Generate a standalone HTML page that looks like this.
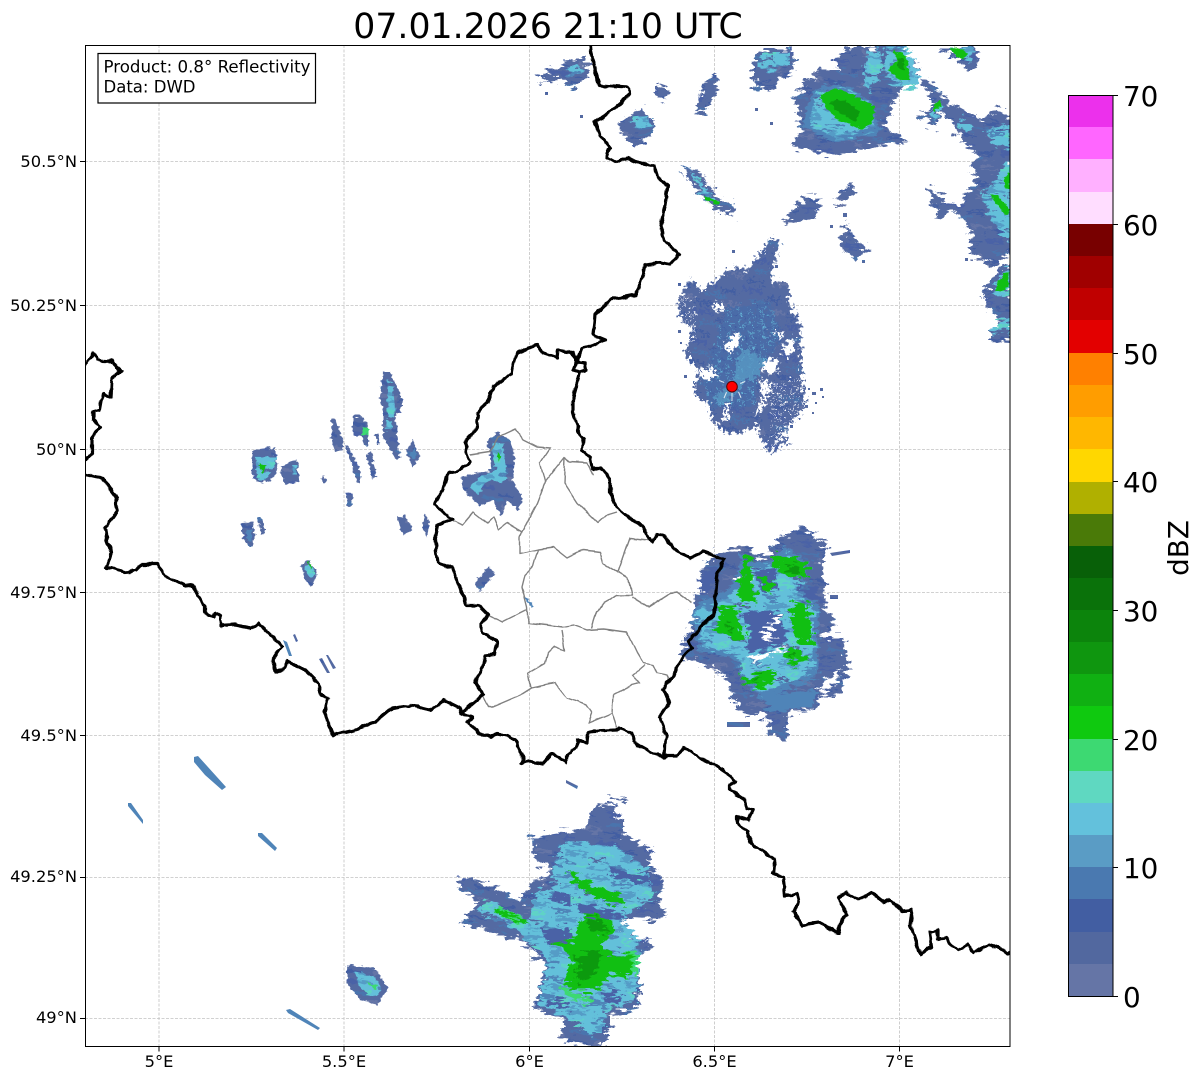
<!DOCTYPE html>
<html><head><meta charset="utf-8"><title>Radar</title>
<style>
html,body{margin:0;padding:0;background:#fff;width:1202px;height:1081px;overflow:hidden}
svg{display:block}
text{font-family:"DejaVu Sans",sans-serif;fill:#000}
.o{fill:url(#po)}.d{fill:#4a62a6}.m{fill:#4f84b8}.l{fill:url(#pl)}.g{fill:#11bf12}.dg{fill:#0c9a0e}.lg{fill:#3dd972}.w{fill:#fff}
.b{fill:none;stroke:#000;stroke-width:3.2;stroke-linejoin:round;stroke-linecap:round}
.a{fill:none;stroke:#808080;stroke-width:1.4;stroke-linejoin:round}
.t{stroke:#000;stroke-width:1}
.gr{stroke:#c2c2c2;stroke-width:.8;stroke-dasharray:3 1.5}
.s{font-size:16.3px}
</style></head><body>
<svg width="1202" height="1081" viewBox="0 0 1202 1081" xmlns="http://www.w3.org/2000/svg">
<defs>
<clipPath id="ax"><rect x="85" y="45" width="925" height="1001"/></clipPath>
<pattern id="po" width="46" height="30" patternUnits="userSpaceOnUse" patternTransform="rotate(10)"><rect width="46" height="30" fill="#546aa2"/><rect y="3" width="20" height="4" fill="#4a62a6"/><rect x="24" y="9" width="16" height="3" fill="#425ea2"/><rect x="8" y="14" width="22" height="3" fill="#4a74ad"/><rect x="30" y="21" width="16" height="4" fill="#6575a6"/><rect x="2" y="24" width="18" height="3" fill="#425ea2"/></pattern>
<pattern id="pl" width="54" height="34" patternUnits="userSpaceOnUse" patternTransform="rotate(8)"><rect width="54" height="34" fill="#63c0da"/><rect y="2" width="20" height="4" fill="#559cc6"/><rect x="26" y="6" width="20" height="3" fill="#4f84b8"/><rect x="6" y="11" width="14" height="4" fill="#5fd3c6"/><rect x="30" y="14" width="22" height="5" fill="#559cc6"/><rect y="19" width="18" height="3" fill="#52689f"/><rect x="20" y="24" width="20" height="4" fill="#4f84b8"/><rect x="42" y="26" width="12" height="4" fill="#5fd3c6"/><rect x="4" y="28" width="12" height="3" fill="#559cc6"/></pattern>
<pattern id="pc" width="11" height="11" patternUnits="userSpaceOnUse"><rect width="11" height="11" fill="#4a6ca8"/><rect x="1" y="2" width="2" height="3" fill="#5a9cc5"/><rect x="6" y="1" width="2" height="2" fill="#52689f"/><rect x="4" y="6" width="2" height="3" fill="#63b0d5"/><rect x="8" y="7" width="2" height="2" fill="#425ea2"/></pattern>
<pattern id="pw" width="9" height="8" patternUnits="userSpaceOnUse"><rect x="1" y="1" width="2" height="2" fill="#fff"/><rect x="6" y="4" width="2" height="1.5" fill="#fff"/></pattern>
<filter id="r" filterUnits="userSpaceOnUse" x="0" y="0" width="1202" height="1081" color-interpolation-filters="sRGB"><feTurbulence type="fractalNoise" baseFrequency=".09 .24" numOctaves="2" seed="4"/><feComponentTransfer result="n"><feFuncR type="discrete" tableValues="0 0 .1 .35 .5 .65 .9 1 1"/><feFuncG type="discrete" tableValues="0 0 .1 .35 .5 .65 .9 1 1"/><feFuncA type="table" tableValues="1 1"/></feComponentTransfer><feDisplacementMap in="SourceGraphic" in2="n" scale="11" xChannelSelector="R" yChannelSelector="G"/></filter>
<filter id="rc" filterUnits="userSpaceOnUse" x="0" y="0" width="1202" height="1081" color-interpolation-filters="sRGB"><feTurbulence type="fractalNoise" baseFrequency=".28" numOctaves="2" seed="9"/><feComponentTransfer result="n"><feFuncR type="discrete" tableValues="0 0 .1 .35 .5 .65 .9 1 1"/><feFuncG type="discrete" tableValues="0 0 .1 .35 .5 .65 .9 1 1"/><feFuncA type="table" tableValues="1 1"/></feComponentTransfer><feDisplacementMap in="SourceGraphic" in2="n" scale="9" xChannelSelector="R" yChannelSelector="G"/></filter>
<filter id="rs" filterUnits="userSpaceOnUse" x="0" y="0" width="1202" height="1081" color-interpolation-filters="sRGB"><feTurbulence type="fractalNoise" baseFrequency=".2 .35" numOctaves="1" seed="2"/><feComponentTransfer result="n"><feFuncR type="discrete" tableValues="0 0 .1 .35 .5 .65 .9 1 1"/><feFuncG type="discrete" tableValues="0 0 .1 .35 .5 .65 .9 1 1"/><feFuncA type="table" tableValues="1 1"/></feComponentTransfer><feDisplacementMap in="SourceGraphic" in2="n" scale="4" xChannelSelector="R" yChannelSelector="G"/></filter>
<filter id="wig" filterUnits="userSpaceOnUse" x="0" y="0" width="1202" height="1081" color-interpolation-filters="sRGB"><feTurbulence type="fractalNoise" baseFrequency=".1" numOctaves="2" seed="7" result="n"/><feDisplacementMap in="SourceGraphic" in2="n" scale="5" xChannelSelector="R" yChannelSelector="G"/></filter>
<filter id="wa" filterUnits="userSpaceOnUse" x="0" y="0" width="1202" height="1081" color-interpolation-filters="sRGB"><feTurbulence type="fractalNoise" baseFrequency=".07" numOctaves="1" seed="3" result="n"/><feDisplacementMap in="SourceGraphic" in2="n" scale="4" xChannelSelector="R" yChannelSelector="G"/></filter>
</defs>
<rect width="1202" height="1081" fill="#fff"/>
<text x="548" y="38" text-anchor="middle" font-size="34.7">07.01.2026 21:10 UTC</text>

<!-- grid -->
<g class="gr">
<path d="M159 45V1046M344 45V1046M529.5 45V1046M714.5 45V1046M899.5 45V1046"/>
<path d="M85 161.5H1010M85 305.5H1010M85 449.5H1010M85 592.5H1010M85 735.5H1010M85 877.5H1010M85 1018.5H1010"/>
</g>

<g clip-path="url(#ax)">
<!-- large echoes with rough edges -->
<g filter="url(#r)">
<path class="o" d="M795 97L818 68L840 70L835 60L847 47L903 47L920 70L900 90L888 117L883 125L910 143L898 143L873 147L835 155L793 147L802 130Z"/>
<path class="m" d="M805 107L820 87L840 83L873 103L880 132L833 143L803 127Z"/>
<path class="l" d="M812 108L824 91L841 88L870 106L875 128L835 137L810 124Z"/>
<path class="l" d="M868 50L878 48L882 70L872 92L863 84ZM888 50L907 47L918 72L912 90L897 84L882 70Z"/>
<path class="o" d="M927 187L950 203L960 205L977 177L970 163L980 157L957 137L955 127L930 97L920 80L933 82L950 103L963 110L980 120L997 108L1012 118L1012 253L990 267L973 253L970 233L960 210L940 218L932 203Z"/>
<path class="l" d="M982 197L1008 160L1012 160L1012 240L997 230ZM985 130L1010 125L1010 150L992 142ZM962 118L972 125L968 132L958 125Z"/>
<path class="o" d="M917 117L937 128L942 107L934 104Z"/>
<path class="l" d="M930 115L938 100L942 108L934 120Z"/>
<path class="o" d="M983 293L1000 267L1012 263L1012 343L993 342L992 327L1000 323L987 307Z"/>
<path class="l" d="M993 292L1002 272L1012 270L1012 293L1000 297ZM992 325L1012 318L1012 333L994 335Z"/>
<path class="o" d="M938 47L973 47L980 60L970 73L957 60Z"/>
<path class="l" d="M948 47L972 48L970 60L958 56Z"/>
<path class="o" d="M760 48L792 48L795 63L790 73L780 78L773 90L755 90L753 60Z"/>
<path class="l" d="M762 52L790 52L790 64L775 70L762 68Z"/>
<path class="o" d="M538 75L550 72L565 62L585 58L590 70L580 85L570 88L560 80L545 82Z"/>
<path class="l" d="M566 70L578 64L582 70L572 76Z"/>
<path class="o" d="M617 125L640 108L655 122L650 135L635 148L625 140Z"/>
<path class="l" d="M632 118L648 116L650 126L636 128Z"/>
<path class="o" d="M718 72L703 82L695 112L705 115L718 90Z"/>
<path class="o" d="M655 85L672 88L665 100L655 95Z"/>
<path class="o" d="M682 165L700 172L720 200L735 205L733 217L715 207L695 190Z"/>
<path class="l" d="M690 172L700 178L716 202L708 200Z"/>
<path class="o" d="M783 225L790 213L803 198L818 197L820 203L813 217L797 222Z"/>
<path class="o" d="M840 247L847 220L853 237L867 250L857 262Z"/>
<path class="o" d="M833 203L847 187L855 187L852 197L840 205Z"/>

<!-- south-east echo -->
<path class="o" d="M700 572L718 552L732 550L748 547L757 558L768 555L780 538L793 533L802 527L827 545L823 567L825 588L823 607L837 623L820 637L843 637L848 670L837 697L820 695L815 710L788 713L787 737L768 737L767 717L738 712L723 673L698 663L680 655L695 617L693 597L712 587Z"/>
<path class="m" d="M693 606L715 596L738 580L738 553L755 563L773 560L783 545L810 563L800 593L820 607L817 640L817 677L787 690L760 700L740 677L737 660L697 650Z"/>
<path class="l" d="M698 610L718 602L742 586L745 560L755 570L775 565L785 552L805 568L797 595L815 610L813 640L812 674L785 684L760 692L742 672L738 655L702 645Z"/>
<path class="d" d="M743 613L770 610L783 617L787 643L750 653L747 633Z"/>
<path class="d" d="M795 585L817 587L823 603L803 597Z"/>
<path class="d" d="M755 570L775 568L778 590L760 592Z"/>
<path class="d" d="M702 572L716 568L714 590L700 592Z"/>
<path class="m" d="M760 695L815 690L812 706L770 712Z"/>
<path class="w" d="M732 578L752 578L752 581L735 581ZM772 617L782 617L780 623L770 622ZM762 632L772 628L775 640L763 640ZM751 657L788 645L772 655L753 663Z"/>
<path class="w" d="M818 694L825 680L840 672L830 690Z"/>
<path class="g" d="M743 555L753 558L751 577L756 602L742 602L739 587L742 577Z"/>
<path class="g" d="M775 555L809 562L805 577L787 577L773 566Z"/>
<path class="g" d="M761 577L775 579L771 594L762 589Z"/>
<path class="g" d="M716 606L736 608L745 640L732 639L711 629L721 620Z"/>
<path class="g" d="M794 600L809 602L812 645L799 645L790 617Z"/>
<path class="g" d="M778 654L793 646L809 657L793 665Z"/>
<path class="g" d="M740 679L760 671L779 671L768 685L755 687Z"/>
<path class="dg" d="M787 565L800 567L798 573L788 572ZM725 625L735 628L732 633ZM788 655L796 652L796 660ZM750 678L762 677L757 683Z"/>

<!-- southern echo -->
<path class="o" d="M457 887L463 878L485 883L520 902L530 882L543 880L550 870L533 857L532 837L583 830L597 803L613 805L623 820L623 835L653 850L647 860L655 870L662 885L657 903L668 913L657 920L620 918L613 927L643 940L653 945L640 957L640 977L637 1010L610 1015L610 1027L603 1046L577 1045L560 1037L563 1020L533 1008L547 962L527 958L540 955L520 940L483 930L463 922L477 903Z"/>
<path class="l" d="M477 910L490 900L530 920L533 897L557 883L550 870L567 840L617 847L650 870L653 900L627 913L620 923L640 940L640 970L633 1003L607 1010L603 1033L587 1033L567 1017L537 1003L550 960L520 933Z"/>
<path class="d" d="M577 903L620 913L625 917L600 918L580 913ZM540 930L567 927L570 945L548 945ZM610 868L650 878L650 884L612 878ZM548 998L570 1003L570 1010L546 1005ZM605 992L622 995L618 1003L606 1002ZM555 890L575 897L575 905L550 900Z"/>
<path class="lg" d="M560 985L590 998L590 1004L560 992ZM625 950L640 955L638 975L625 968ZM500 905L525 918L520 925L495 912Z"/>
<path class="g" d="M573 940L583 913L610 917L617 933L603 937L603 950L633 957L630 977L610 973L597 990L573 990L563 983L573 957L553 943Z"/>
<path class="dg" d="M585 916L606 918L607 932L590 930ZM578 955L600 950L597 975L578 985Z"/>
<path class="g" d="M567 868L577 877L598 887L623 898L627 903L607 903L573 883Z"/>
<path class="g" d="M493 907L528 920L528 925L497 913Z"/>
<path class="o" d="M608 795L630 800L628 803L610 798Z"/>
</g>

<!-- central echo -->
<g filter="url(#rc)">
<path class="o" d="M678 300L690 280L703 290L733 267L748 270L772 238L780 240L770 280L788 283L790 307L800 323L802 377L807 417L787 433L788 442L770 453L758 433L760 423L743 433L725 433L712 420L708 402L695 397L698 370L685 353L693 330L680 317Z"/>
<path fill="url(#pc)" d="M703 380L727 307L770 303L783 337L760 370L753 407L710 407Z"/>
<path fill="#5a9cc5" opacity=".75" d="M714 398L734 378L740 350L748 350L766 362L757 378L745 380L738 392L718 405Z"/>
<path class="w" d="M712 303L718 302L725 310L716 312ZM723 347L735 333L742 337L732 352ZM680 330L693 323L690 335L682 336ZM780 350L793 337L795 350L788 357ZM760 363L778 358L777 373L767 373ZM697 370L710 367L717 377L703 380ZM760 380L772 383L767 397L760 413L753 417L762 400ZM725 403L730 403L728 420L724 420ZM768 332L785 333L782 337Z"/>
<path class="w" d="M772 445L790 425L812 400L815 412L796 432L787 438Z"/>
<path fill="url(#pw)" d="M770 385L802 375L810 420L770 450Z"/>
<path fill="url(#pw)" d="M676 300L700 290L695 345L680 345Z"/>
</g>
<path class="w" opacity=".8" d="M731.5 393h1v8h-1zM726 392l1 .4l-2.5 6l-1 -.4zM738 392l1 -.4l2.5 6l-1 .4zM724 383l-5 -2l.4 -1l5 2zM740 383l5 -2l.4 1l-5 2z"/>
<path class="o" d="M812 392h4v3h-4zM805 405h3v3h-3zM820 388h3v3h-3zM800 395h3v3h-3zM790 425h3v3h-3zM690 345h3v3h-3zM678 330h3v3h-3zM684 375h3v3h-3zM775 265h3v3h-3zM830 225h3v3h-3zM732 250h3v3h-3zM678 283h3v3h-3zM545 92h3v3h-3zM580 115h3v3h-3zM755 108h3v3h-3zM770 122h3v3h-3zM862 260h3v3h-3zM965 258h3v3h-3zM843 213h4v4h-4zM815 402h2v2h-2zM822 396h2v2h-2zM808 388h2v2h-2zM812 412h2v2h-2zM686 320h2v2h-2zM680 342h2v2h-2zM690 360h2v2h-2z"/>

<!-- greens on northern/eastern echoes -->
<g filter="url(#rs)">
<path class="g" d="M820 95L837 88L875 106L872 122L862 130L837 119L826 107Z"/>
<path class="dg" d="M830 101L845 100L860 112L855 122L835 110Z"/>
<path class="g" d="M893 50L907 57L910 80L900 80L888 70L897 60Z"/>
<path class="dg" d="M897 58L904 58L904 70L897 68Z"/>
<path class="g" d="M950 47L968 52L964 60L956 56Z"/>
<path class="g" d="M995 290L1003 273L1008 273L1008 287L1000 292Z"/>
<path class="g" d="M990 195L998 195L1010 212L1006 216ZM1004 178L1010 172L1010 190L1005 188Z"/>
<path class="g" d="M933 106L940 100L942 106L934 112Z"/>
<path class="g" d="M704 196L720 202L718 205L705 200Z"/>

<!-- Luxembourg echo -->
<path class="o" d="M487 440L498 433L510 440L515 457L513 480L523 500L518 510L507 500L502 517L493 500L480 507L462 488L462 477L492 470L490 453Z"/>
<path class="l" d="M492 443L503 443L507 480L500 483L487 480L478 495L470 487L480 477L495 470Z"/>
<path class="g" d="M496 450L502 457L498 461Z"/>
<path class="o" d="M475 583L488 567L495 573L480 592Z"/>
<path class="m" d="M523 597L526 597L534 606L532 608Z"/>
<!-- western small echoes -->
<path class="o" d="M252 450L275 447L278 473L268 482L257 482L252 475Z"/>
<path class="l" d="M255 457L277 457L273 470L265 480L258 480Z"/>
<path class="g" d="M258 465L266 465L263 474Z"/>
<path class="o" d="M280 470L288 462L298 460L299 482L285 485Z"/>
<path class="l" d="M292 465L297 465L297 475L292 475Z"/>
<path class="o" d="M242 523L253 522L255 535L252 547L248 547L243 537Z"/>
<path class="m" d="M246 530L252 530L252 540L247 540Z"/>
<path class="o" d="M257 518L262 517L265 533L262 535Z"/>
<path class="o" d="M301 565L308 560L318 573L311 587L305 580Z"/>
<path class="l" d="M304 567L310 563L316 574L310 578Z"/>
<path class="g" d="M308 562L312 565L311 570Z"/>
<path class="o" d="M383 372L390 372L403 400L400 412L395 415L400 458L395 458L383 437L383 415L380 398Z"/>
<path class="l" d="M387 378L393 383L395 410L392 430L385 430L388 410Z"/>
<path class="o" d="M332 418L335 418L343 440L342 450L335 452L331 437Z"/>
<path class="o" d="M345 445L348 445L360 470L360 483L357 482Z"/>
<path class="o" d="M353 416L360 416L368 423L368 445L364 445L362 435L353 435Z"/>
<path class="lg" d="M362 427L368 427L368 435L363 435Z"/>
<path class="o" d="M366 453L371 453L377 477L372 478Z"/>
<path class="o" d="M406 452L413 440L420 457L413 467Z"/>
<path class="m" d="M410 452L415 448L416 458L412 460Z"/>
<path class="o" d="M346 493L352 492L353 505L348 507Z"/>
<path class="o" d="M397 518L405 515L413 530L403 535Z"/>
<path class="o" d="M422 527L425 513L430 522L427 537Z"/>
<path class="o" d="M322 477L326 477L327 483L322 483Z"/>
<path class="o" d="M375 434L378 433L380 445L377 445Z"/>
<path class="o" d="M347 965L375 968L388 988L378 1005L360 1000L348 985Z"/>
<path class="l" d="M355 972L373 975L383 990L372 997L358 985Z"/>
<path class="lg" d="M365 982L378 985L376 990Z"/>
</g>
<path class="m" d="M283 640L287 642L292 656L289 656Z"/>
<path class="o" d="M319 659L322 658L330 673L327 673ZM326 655L328 655L336 668L333 669ZM293 635L295 634L298 641L296 642Z"/>
<path class="m" d="M194 757L198 756L226 787L222 790L205 775L194 762Z"/>
<path class="m" d="M128 803L131 803L143 820L143 824L128 806Z"/>
<path class="m" d="M258 833L262 833L277 848L275 851L258 836Z"/>
<path class="m" d="M286 1010L290 1009L320 1028L318 1030L288 1013Z"/>
<path class="o" d="M566 780L578 786L577 789L566 783Z"/>
<path class="o" d="M727 722L750 722L750 727L727 727Z"/>
<path class="o" d="M830 553L850 550L850 553L832 556ZM830 595L838 595L838 599L830 599Z"/>

<!-- admin boundaries -->
<g class="a" filter="url(#wa)">
<path d="M452 520L462 525L473 512L487 523L493 517L498 530L507 523L522 532L527 522L537 503L545 482L540 463L550 448L537 447L523 440L515 429L498 437L490 452L470 455"/>
<path d="M545 482L565 457L570 462L587 463L593 475"/>
<path d="M565 457L564 483L577 503L598 523L607 515L617 512"/>
<path d="M522 532L520 537L520 553L538 549L553 547L567 558L583 550L600 552L603 563L618 572L630 538L647 540"/>
<path d="M618 572L628 578L632 595L617 595L603 603L597 612L592 628"/>
<path d="M632 597L648 607L670 593L677 592L692 603"/>
<path d="M538 549L533 567L525 575L522 587L527 607L528 623L547 625L563 627L573 625L587 630L603 629L627 632L637 653L643 663L653 665L657 673L667 675L669 680"/>
<path d="M488 615L503 622L527 610"/>
<path d="M562 630L565 650L555 646L548 653L545 663L528 673L531 688L555 683L567 698L587 705L592 712L588 723L612 713L617 728"/>
<path d="M612 713L613 695L632 685L640 683L633 675L645 665"/>
<path d="M531 688L520 695L492 707L488 707L482 695"/>
</g>

<!-- national boundaries -->
<g class="b" filter="url(#wig)">
<path d="M85 365L93 353L97 360L113 361L117 368L121 371L112 378L111 397L103 393L100 410L93 412L93 420L100 427L92 438L92 453L85 460"/>
<path d="M85 474L102 478L117 498L117 510L105 528L107 540L112 553L106 568L112 568L125 572L135 571L142 564L157 564L167 577L185 586L193 585L205 607L205 612L213 616L215 612L220 615L221 626L235 625L250 628L258 623L282 646L272 661L276 672L285 668L287 661L305 670L318 683L321 695L328 698L324 712L333 735L355 730L375 722L392 708L410 705L430 710L440 703L444 700L460 708L462 713L472 717L468 723L483 735L490 737L497 734L508 736L518 742L520 755L523 760L522 763L528 761L543 764L552 754L567 762L567 755L576 748L577 740L587 742L588 733L593 731L617 730L620 728L632 735L637 745L653 754L662 755L665 758L667 755L677 755L685 748L698 757L715 765L730 775L736 781L730 785L730 790L745 800L747 808L753 810L748 820L738 817L738 823L748 832L748 838L757 847L775 859L773 873L783 877L785 895L797 894L799 902L793 912L803 925L818 923L838 933L842 920L848 915L838 898L847 893L858 899L872 893L885 903L890 900L903 911L912 910L910 925L916 943L920 955L932 946L930 932L938 930L938 939L945 938L958 950L968 944L973 953L988 945L1005 950L1008 953L1014 950"/>
<path d="M590 42L592 60L597 75L600 85L628 87L631 93L620 103L606 115L595 122L600 135L610 147L606 157L615 162L628 158L640 163L655 166L658 178L668 185L665 205L660 225L665 240L679 255L670 265L660 263L645 265L640 285L635 295L610 300L595 315L593 335L605 340L593 345L583 348L580 353L577 362L585 363L586 370L580 372L573 370L577 362L572 352L558 350L557 358L542 353L538 345L517 352L512 373L493 387L488 403L478 412L477 428L465 442L467 455L470 462L460 470L448 473L443 490L434 505L448 515L452 520L438 525L435 540L438 563L452 568L467 605L478 605L488 615L482 623L482 632L497 642L495 655L485 656L483 667L475 682L483 695L462 713"/>
<path d="M580 372L573 397L573 413L578 430L583 438L582 450L590 457L592 468L600 468L610 480L610 493L617 508L632 520L643 525L648 537L652 542L657 535L665 537L677 552L690 558L703 552L720 558L724 558L721 567L718 573L715 600L715 613L705 623L688 642L692 648L685 655L670 680L662 690L670 702L660 717L666 737L665 758"/>
</g>
<circle cx="732" cy="386.7" r="5.3" fill="#f00" stroke="#5a0000" stroke-width="1"/>
</g>

<!-- frame -->
<rect x="85.5" y="45.5" width="924.5" height="1001" fill="none" stroke="#000" stroke-width="1"/>
<!-- annotation -->
<rect x="98" y="53.5" width="217.5" height="49.5" fill="#fff" stroke="#000" stroke-width="1.2"/>
<text x="103.5" y="72.5" font-size="16.7" textLength="207" lengthAdjust="spacingAndGlyphs">Product: 0.8° Reflectivity</text>
<text x="103.5" y="92.5" font-size="16.7" textLength="92" lengthAdjust="spacingAndGlyphs">Data: DWD</text>

<!-- ticks -->
<g class="t">
<path d="M159 1046.5v5M344 1046.5v5M529.5 1046.5v5M714.5 1046.5v5M899.5 1046.5v5"/>
<path d="M85 161.5h-5M85 305.5h-5M85 449.5h-5M85 592.5h-5M85 735.5h-5M85 877.5h-5M85 1018.5h-5"/>
</g>
<g class="s" text-anchor="middle">
<text x="159" y="1067">5°E</text><text x="344" y="1067">5.5°E</text><text x="529.5" y="1067">6°E</text><text x="714.5" y="1067">6.5°E</text><text x="899.5" y="1067">7°E</text>
</g>
<g class="s" text-anchor="end">
<text x="77" y="167">50.5°N</text><text x="77" y="311">50.25°N</text><text x="77" y="455">50°N</text><text x="77" y="598">49.75°N</text><text x="77" y="741">49.5°N</text><text x="77" y="882">49.25°N</text><text x="77" y="1023">49°N</text>
</g>

<!-- colorbar -->
<g>
<rect x="1068" y="95" width="45" height="32" fill="#ec30ec"/>
<rect x="1068" y="127" width="45" height="32" fill="#ff66ff"/>
<rect x="1068" y="159" width="45" height="33" fill="#ffb0ff"/>
<rect x="1068" y="192" width="45" height="32" fill="#ffddff"/>
<rect x="1068" y="224" width="45" height="32" fill="#780000"/>
<rect x="1068" y="256" width="45" height="32" fill="#a00000"/>
<rect x="1068" y="288" width="45" height="32" fill="#c00000"/>
<rect x="1068" y="320" width="45" height="33" fill="#e30000"/>
<rect x="1068" y="353" width="45" height="32" fill="#ff8000"/>
<rect x="1068" y="385" width="45" height="32" fill="#ff9d00"/>
<rect x="1068" y="417" width="45" height="32" fill="#ffb700"/>
<rect x="1068" y="449" width="45" height="33" fill="#ffd700"/>
<rect x="1068" y="482" width="45" height="32" fill="#b0b000"/>
<rect x="1068" y="514" width="45" height="32" fill="#4a7a08"/>
<rect x="1068" y="546" width="45" height="32" fill="#086008"/>
<rect x="1068" y="578" width="45" height="32" fill="#0a720a"/>
<rect x="1068" y="610" width="45" height="32" fill="#0c840c"/>
<rect x="1068" y="642" width="45" height="32" fill="#0f960f"/>
<rect x="1068" y="674" width="45" height="32" fill="#10b012"/>
<rect x="1068" y="706" width="45" height="33" fill="#0fc90f"/>
<rect x="1068" y="739" width="45" height="32" fill="#3dd972"/>
<rect x="1068" y="771" width="45" height="32" fill="#5fd8c1"/>
<rect x="1068" y="803" width="45" height="32" fill="#63c1dc"/>
<rect x="1068" y="835" width="45" height="32" fill="#5a9cc5"/>
<rect x="1068" y="867" width="45" height="32" fill="#4a79b0"/>
<rect x="1068" y="899" width="45" height="33" fill="#425ea2"/>
<rect x="1068" y="932" width="45" height="32" fill="#52689f"/>
<rect x="1068" y="964" width="45" height="32" fill="#6575a6"/>
</g>
<rect x="1068.5" y="95.5" width="44.5" height="901" fill="none" stroke="#000" stroke-width="1"/>
<g class="t">
<path d="M1113 95.5h5M1113 224.5h5M1113 353.5h5M1113 481.5h5M1113 610.5h5M1113 739.5h5M1113 867.5h5M1113 996.5h5"/>
</g>
<g font-size="27.8">
<text x="1123" y="106">70</text><text x="1123" y="235">60</text><text x="1123" y="364">50</text><text x="1123" y="492">40</text><text x="1123" y="621">30</text><text x="1123" y="750">20</text><text x="1123" y="878">10</text><text x="1123" y="1007">0</text>
</g>
<text transform="translate(1188 548) rotate(-90)" text-anchor="middle" font-size="27.8">dBZ</text>
</svg>
</body></html>
